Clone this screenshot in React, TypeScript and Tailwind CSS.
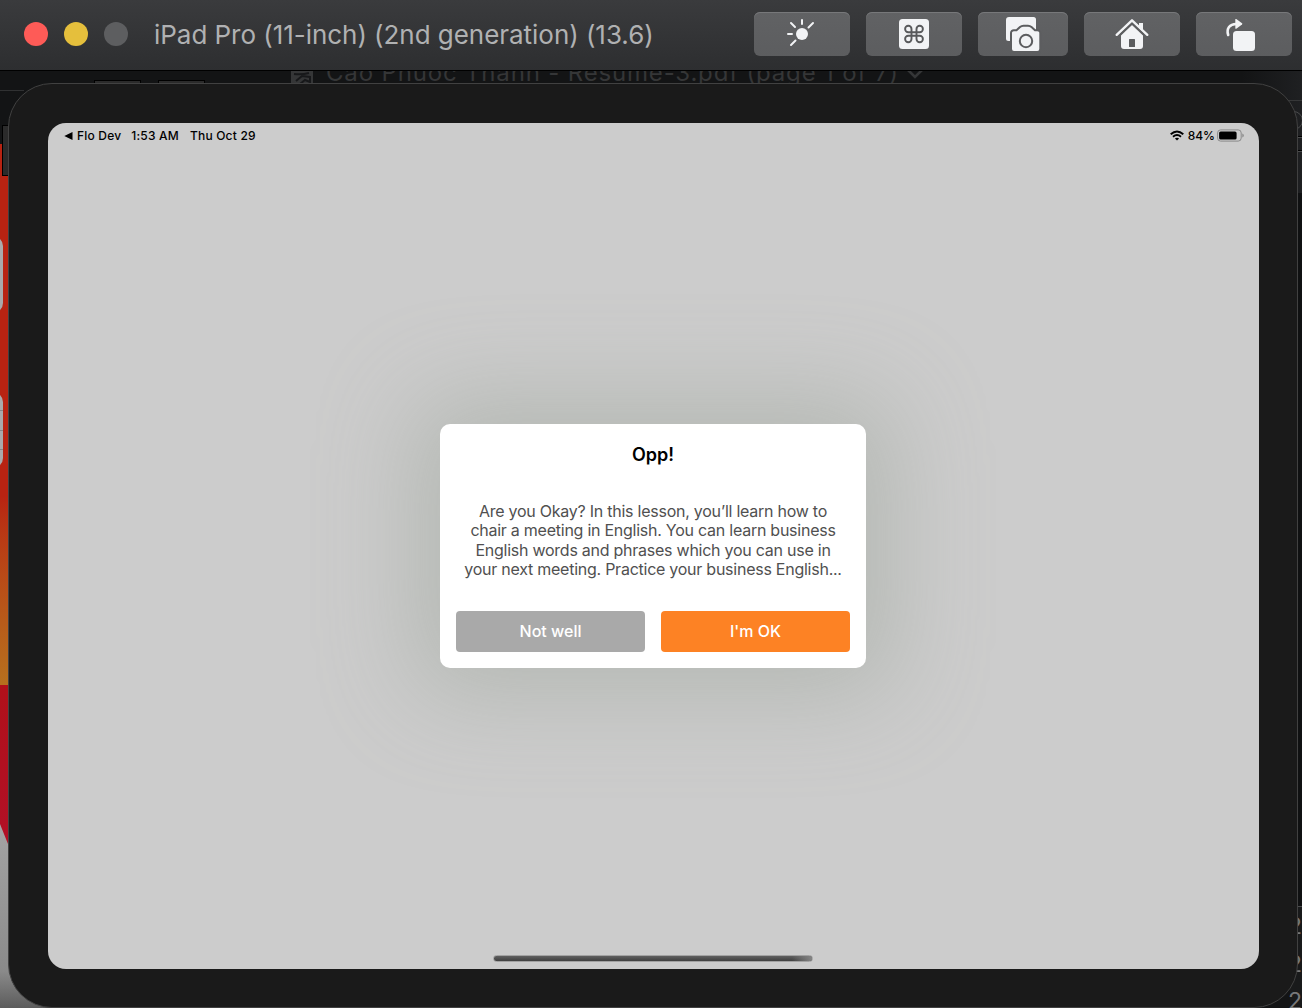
import type { ReactNode } from "react";

function ToolButton({ width, children }: { width: string; children: ReactNode }) {
  return (
    <button
      className={`${width} flex h-11 items-center justify-center rounded-md bg-linear-to-b from-[#616264] to-[#5c5d5f] shadow-[inset_0_1px_0_#77787a]`}
    >
      {children}
    </button>
  );
}

function SunIcon() {
  return (
    <svg width="96" height="44" viewBox="0 0 96 44" fill="none" stroke="#f2f3f5" strokeWidth="2" strokeLinecap="round">
      <circle cx="48" cy="22" r="6" fill="#f2f3f5" stroke="none" />
      <path d="M48 8v4M37 11l4 4M59 11l-4.500 4.500M34 22h4M41.500 28.500l-4.500 4.500" />
    </svg>
  );
}

function CommandIcon() {
  return (
    <svg width="96" height="44" viewBox="0 0 96 44" fill="none">
      <rect x="33" y="7" width="30" height="30" rx="3.500" fill="#f2f3f5" />
      <path
        d="M45.500 24.500V17a3.200 3.200 0 1 0-3.200 3.200H53.700A3.200 3.200 0 1 0 50.500 17V27a3.200 3.200 0 1 0 3.200-3.200H42.300A3.200 3.200 0 1 0 45.500 27V24.500"
        stroke="#58595b"
        strokeWidth="1.900"
      />
    </svg>
  );
}

function CameraIcon() {
  return (
    <svg width="90" height="44" viewBox="0 0 90 44">
      <path d="M31 5h24.500a2.500 2.500 0 0 1 2.500 2.500V22H34v7h-3.500a2.500 2.500 0 0 1-2.500-2.500V8a3 3 0 0 1 3-3z" fill="#f2f3f5" />
      <path
        d="M36 40a3 3 0 0 1-3-3V21a2.800 2.800 0 0 1 2.800-2.800h2.700l3.500-3.200q1.500-1.300 3.500-1.300h4.500q2 0 3.500 1.300l3.500 3.200h2.500a2.800 2.800 0 0 1 2.800 2.800V37a3 3 0 0 1-3 3z"
        fill="#f2f3f5"
        stroke="#5c5d5f"
        strokeWidth="2"
      />
      <circle cx="48" cy="29" r="6.200" fill="none" stroke="#5c5d5f" strokeWidth="2" />
    </svg>
  );
}

function HomeIcon() {
  return (
    <svg width="96" height="44" viewBox="0 0 96 44">
      <path d="M37 23.500 48 13l11 10.500V34a3 3 0 0 1-3 3H40a3 3 0 0 1-3-3z" fill="#f2f3f5" />
      <path d="M55 11h4v7.500l-4-4z" fill="#f2f3f5" />
      <path d="M32.700 22.800 48 8.300l15.300 14.500" fill="none" stroke="#f2f3f5" strokeWidth="2.400" strokeLinecap="round" strokeLinejoin="round" />
      <path d="M36 22.800 48 11.700l12 11.100" fill="none" stroke="#5c5d5f" strokeWidth="1.300" />
      <rect x="45" y="27" width="6" height="8" rx=".5" fill="#5c5d5f" />
    </svg>
  );
}

function RotateIcon() {
  return (
    <svg width="96" height="44" viewBox="0 0 96 44">
      <rect x="37" y="19" width="22" height="20" rx="3.500" fill="#f2f3f5" />
      <path d="M32.200 23C30 16.500 34 12 40 12" fill="none" stroke="#f2f3f5" strokeWidth="2.600" strokeLinecap="round" />
      <path d="M39.300 7.600q0-1 1-.5l5.700 4.200q.7.600 0 1.200l-5.700 4.200q-1 .5-1-.5z" fill="#f2f3f5" />
    </svg>
  );
}

function TitleBar() {
  return (
    <header className="relative flex h-[71px] shrink-0 border-b border-black bg-linear-to-b from-[#3a3b3d] to-[#2d2e30]">
      <div className="flex h-[68px] w-[754px] items-center pl-6">
        <div className="flex gap-4">
          <span className="size-6 rounded-full bg-[#fe5b57]" />
          <span className="size-6 rounded-full bg-[#e5bf3c]" />
          <span className="size-6 rounded-full bg-[#5d5e60]" />
        </div>
        <h1 className="ml-[26px] whitespace-nowrap text-[26px] tracking-[-0.04px] text-[#b0b1b2]">
          iPad Pro (11-inch) (2nd generation) (13.6)
        </h1>
      </div>
      <div className="flex gap-4 pt-3">
        <ToolButton width="w-24"><SunIcon /></ToolButton>
        <ToolButton width="w-24"><CommandIcon /></ToolButton>
        <ToolButton width="w-[90px]"><CameraIcon /></ToolButton>
        <ToolButton width="w-24"><HomeIcon /></ToolButton>
        <ToolButton width="w-24"><RotateIcon /></ToolButton>
      </div>
    </header>
  );
}

/* Slivers of the windows and wallpaper that stay visible around the device. */
function Desktop() {
  return (
    <div className="absolute inset-0 overflow-hidden bg-[#131415]">
      <div className="absolute left-0 top-[90px] h-px w-6 bg-[#303132]" />
      <div className="absolute left-[291px] top-[60px] flex h-[26px] items-center whitespace-nowrap text-[24px] text-[#353637]">
        <svg className="mr-[13px]" width="22" height="26" viewBox="0 0 22 26">
          <path d="M0 0h22v26H0z" fill="#353637" />
          <path d="M3 14q8 1 15-1M5 21l6-5 8 1v5l-5-2-5 4" fill="none" stroke="#17181a" strokeWidth="2" />
        </svg>
        <span className="tracking-[0.83px]">Cao Phuoc Thanh - Resume-3.pdf (page 1 of 7)</span>
        <svg className="ml-2 mt-[2px]" width="16" height="10" viewBox="0 0 16 10" fill="none" stroke="#353637" strokeWidth="2.500">
          <path d="m1 1 7 7 7-7" />
        </svg>
      </div>

      <div className="absolute left-0 top-[144px] h-[542px] w-3 bg-linear-to-b from-[#b82312] from-65% to-[#b6701e]" />
      <div className="absolute left-0 top-[685px] h-[165px] w-3 bg-linear-to-b from-[#b0101a] to-[#b21026]" />
      <svg className="absolute left-0 top-[820px]" width="60" height="188" viewBox="0 0 60 188">
        <defs>
          <linearGradient id="wall" x2="0" y2="1">
            <stop stopColor="#a4a4a4" />
            <stop offset=".8" stopColor="#8a8a8a" />
            <stop offset="1" stopColor="#5c5c5c" />
          </linearGradient>
        </defs>
        <path d="M0 4 8 24h52v164H0z" fill="url(#wall)" />
      </svg>
      <div className="absolute -left-5 top-[236px] h-[77px] w-[23px] rounded-r-[10px] bg-[#a9aaab]" />
      <div className="absolute -left-5 top-[392px] flex h-[76px] w-[23px] flex-col justify-evenly rounded-r-[10px] bg-[#a9aaab]">
        <span className="h-px bg-[#858687]" />
        <span className="h-px bg-[#858687]" />
        <span className="h-px bg-[#858687]" />
      </div>

      <div className="absolute right-0 top-[71px] h-[123px] w-[60px] bg-linear-to-r from-[#131415] to-[#1f2022]">
        <div className="ml-10 mt-[29px] h-px bg-[#363738]" />
        <div className="mt-[35px] h-px bg-black" />
        <div className="h-px bg-[#4a4b4c]" />
        <div className="mt-[12px] h-px bg-black" />
        <div className="h-px bg-[#4a4b4c]" />
      </div>
      <div className="absolute left-[1284px] top-[111px] size-[19px] rounded-full border border-[#4a4b4c]" />
      <div className="absolute right-0 top-[193px] h-[815px] w-2 bg-[#101112]" />
      <div className="absolute left-[1290px] top-[906px] h-[102px] w-3 border-t border-[#4a4b4c] bg-[#191a1b]" />
      <div className="absolute left-[1288px] top-[908px] flex w-4 flex-col text-[23px] leading-[37.500px] text-[#77787a]">
        <span>2</span>
        <span>2</span>
        <span>2</span>
      </div>
    </div>
  );
}

function StatusBar() {
  return (
    <div className="flex h-6 items-center justify-between pl-4 pr-[15px] text-[12px] font-medium text-black">
      <div className="flex items-center whitespace-nowrap pt-px tracking-[0.2px]">
        <svg width="9" height="8" viewBox="0 0 9 8">
          <path d="M0.300 4 8.500 0v8z" />
        </svg>
        <span className="ml-1">Flo Dev</span>
        <span className="ml-[10px]">1:53 AM</span>
        <span className="ml-[11px]">Thu Oct 29</span>
      </div>
      <div className="flex items-center">
        <svg width="14" height="11" viewBox="0 0 14 11" fill="none" stroke="#000" strokeWidth="1.900">
          <path d="M.7 4.200q6.300-5.600 12.600 0M3 6.700q4-3.300 8 0" />
          <path d="M7 10.600 4.900 8.500q2.100-1.500 4.200 0z" fill="#000" stroke="none" />
        </svg>
        <span className="ml-[4px] pt-px">84%</span>
        <svg className="ml-[2px]" width="27" height="13" viewBox="0 0 27 13">
          <rect x=".6" y=".9" width="23.600" height="11.200" rx="3" fill="none" stroke="#8a8a8a" />
          <rect x="2.100" y="2.400" width="17.500" height="8.200" rx="1.600" />
          <path d="M25.300 4.500q1.500.6 1.500 2t-1.500 2z" fill="#8a8a8a" />
        </svg>
      </div>
    </div>
  );
}

function Dialog() {
  return (
    <section className="flex h-[244px] w-[426px] flex-col rounded-[10px] bg-white px-4 pt-[18px] text-center shadow-[0_0_96px_24px_rgba(148,158,146,0.43)]">
      <h2 className="text-[18px] font-semibold leading-[26px] tracking-[-0.05px] text-black">Opp!</h2>
      <p className="mt-[34px] whitespace-nowrap text-[16px] leading-[19.300px] tracking-[-0.25px] text-[#505050]">
        <span className="block">Are you Okay? In this lesson, you’ll learn how to</span>
        <span className="block">chair a meeting in English. You can learn business</span>
        <span className="block">English words and phrases which you can use in</span>
        <span className="block">your next meeting. Practice your business English...</span>
      </p>
      <div className="mt-8 grid grid-cols-2 gap-4 text-[16px] font-medium text-white">
        <button className="h-[41px] rounded bg-[#a9a9a9] pb-[2px]">Not well</button>
        <button className="h-[41px] rounded bg-[#fd8224] pb-[2px]">I'm OK</button>
      </div>
    </section>
  );
}

export default function App() {
  return (
    <div className="relative flex h-[1008px] w-[1302px] flex-col overflow-hidden bg-black font-['Inter',sans-serif]">
      <Desktop />
      <TitleBar />
      <div className="relative ml-2 mt-3 h-[925px] w-[1290px]">
        <span className="absolute -top-[3px] left-[86px] h-3 w-[47px] border border-black bg-[#2b2b2b]" />
        <span className="absolute -top-[3px] left-[150px] h-3 w-[47px] border border-black bg-[#2b2b2b]" />
        <span className="absolute -left-[6px] top-[42px] h-[51px] w-3 border border-black bg-[#2b2b2b]" />
        <div className="relative h-full rounded-[44px] border border-[#414141] bg-[#1a1a1a] pl-[39px] pt-[39px]">
          <main className="flex h-[846px] w-[1211px] flex-col items-center overflow-hidden rounded-[18px] bg-[#cccccc]">
            <div className="relative z-10 w-full"><StatusBar /></div>
            <div className="mr-px mt-[277px]"><Dialog /></div>
            <div className="mr-px mt-[287px] flex h-[7px] w-80 overflow-hidden rounded-full border border-[#a2a2a2] bg-linear-to-b from-[#606060] to-[#404040]">
              <span className="ml-auto w-5 bg-linear-to-r from-transparent to-[#858585]" />
            </div>
          </main>
        </div>
      </div>
    </div>
  );
}
